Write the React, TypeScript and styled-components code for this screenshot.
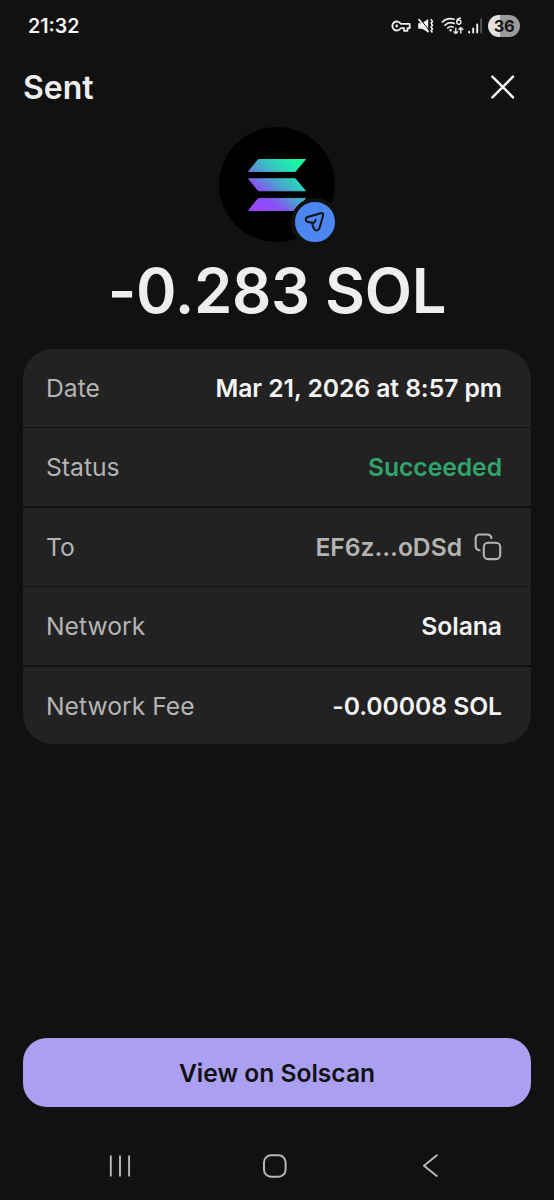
import React from "react";
import styled, { createGlobalStyle } from "styled-components";

const GlobalStyle = createGlobalStyle`
  * { box-sizing: border-box; }
  body {
    margin: 0;
    background: #111111;
    font-family: Inter, "Liberation Sans", sans-serif;
    color: #eeeeee;
  }
  button { font: inherit; border: 0; padding: 0; background: none; color: inherit; }
  svg { display: block; flex: none; }
`;

const Screen = styled.main`
  width: 554px;
  height: 1200px;
  display: flex;
  flex-direction: column;
  background: #111111;
  overflow: hidden;
`;

const StatusBar = styled.div`
  height: 52px;
  padding: 0 34px 0 28px;
  display: flex;
  align-items: center;
  justify-content: space-between;
`;

const Clock = styled.span`
  font-size: 19.6px;
  font-weight: 600;
  color: #f7f7f7;
`;

const StatusIcons = styled.div`
  display: flex;
  align-items: center;
`;

const NetworkIcons = styled.div`
  display: flex;
  align-items: center;
  gap: 6px;
  margin-right: 3px;
`;

const Battery = styled.span`
  width: 32px;
  height: 22px;
  margin-left: 5px;
  border-radius: 11px;
  display: flex;
  align-items: center;
  justify-content: center;
  background: linear-gradient(90deg, #e2e2e2 36%, #9b9b9b 36%);
  color: #151515;
  font-size: 16.5px;
  font-weight: 700;
  letter-spacing: -0.4px;
`;

const Header = styled.header`
  height: 70px;
  padding: 0 37px 0 23px;
  display: flex;
  align-items: center;
  justify-content: space-between;
`;

const Title = styled.h1`
  margin: 0;
  padding-top: 2px;
  font-size: 32px;
  line-height: 40px;
  font-weight: 600;
`;

const IconButton = styled.button`
  display: flex;
`;

const TokenAvatar = styled.div`
  position: relative;
  width: 116px;
  height: 115px;
  margin: 5px auto 0;
  border-radius: 50%;
  background: #000;
  display: flex;
  align-items: center;
  justify-content: center;
`;

const SentBadge = styled.span`
  position: absolute;
  right: -4px;
  bottom: -4px;
  width: 48px;
  height: 48px;
  border: 4px solid #111111;
  border-radius: 50%;
  background: #4c87f1;
`;

const Amount = styled.div`
  margin-top: 11px;
  height: 76px;
  line-height: 76px;
  text-align: center;
  white-space: nowrap;
  font-size: 61.5px;
  font-weight: 600;
  letter-spacing: -0.3px;
`;

const Details = styled.dl`
  margin: 20px 23px 0;
  height: 395.4px;
  border-radius: 30px;
  overflow: hidden;
  display: flex;
  flex-direction: column;
  gap: 1.8px;
`;

const Row = styled.div`
  flex: 1;
  padding: 0.3px 29px 0 23px;
  display: flex;
  align-items: center;
  justify-content: space-between;
  background: #222222;
  font-size: 24.7px;
`;

const Label = styled.dt`
  color: #b4b4b4;
`;

const Value = styled.dd<{ $color?: string }>`
  margin: 0;
  display: flex;
  align-items: center;
  gap: 12px;
  font-weight: 600;
  letter-spacing: -0.06px;
  color: ${({ $color = "#f4f4f4" }) => $color};
`;

const ExplorerButton = styled.button`
  && {
    margin: auto 23px 0;
    height: 69px;
    flex: none;
    border-radius: 24px;
    background: #ab9ff2;
    color: #111111;
    font-size: 24.6px;
    font-weight: 600;
  }
`;

const NavBar = styled.nav`
  height: 92.7px;
  flex: none;
  padding: 46.5px 108px 0 104px;
  display: flex;
  align-items: flex-start;
  justify-content: space-between;
`;

const KeyIcon = () => (
  <svg width="20" height="14" viewBox="0 0 20 14" fill="none" stroke="#f0f0f0" strokeWidth="1.8" strokeLinejoin="round">
    <path d="M9.8 4.9A4.5 4.5 0 1 0 9.8 9.1H13V11.8H16.5V9.1H18.7V4.9Z" />
    <circle cx="5.7" cy="7" r="1.4" fill="#f0f0f0" stroke="none" />
  </svg>
);

const MuteIcon = () => (
  <svg width="18" height="18" viewBox="0 0 18 18" fill="none" stroke="#f0f0f0" strokeWidth="1.7" strokeLinecap="round">
    <path d="M1.2 6.3H5L11.2 2V15.2L5 11.8H1.2Z" fill="#f0f0f0" stroke="none" />
    <path d="M2.9 1.8 12 13.2" stroke="#111111" strokeWidth="1" />
    <path d="M1.9 2.6 11 14.6" />
    <path d="M14.2 2.6 15.4 4.4 14.2 6.2 15.4 8.2 14.2 10.1 15.4 12 14.2 13.8 15 15" strokeWidth="1.6" />
  </svg>
);

const WifiIcon = () => (
  <svg width="24" height="20" viewBox="0 0 24 20" fill="none" stroke="#f0f0f0" strokeWidth="1.7" strokeLinecap="round" strokeLinejoin="round">
    <path d="M1.4 6C4.5 2.7 8.7 1.8 13 3.3M4 9.1C6.7 6.5 10 6.1 13.1 7.4M6.8 12C8.5 10.4 10.2 10.1 12 11" />
    <circle cx="9.5" cy="14.2" r="1.2" fill="#f0f0f0" stroke="none" />
    <path d="M19.3 2.3C16.9 2.2 15.8 3.6 15.8 5.8A2.1 2.1 0 1 0 16 5.2" strokeWidth="1.5" />
    <path d="M14.8 12.2V17.6M12.9 15.8 14.8 17.6 16.7 15.8M19.8 17V11.6M17.9 13.4 19.8 11.6 21.7 13.4" strokeWidth="1.4" />
  </svg>
);

const SignalIcon = () => (
  <svg width="15" height="16" viewBox="0 0 15 16" strokeWidth="1.9" strokeLinecap="round">
    <path d="M1.2 13.7V14.5M5.2 10.5V14.5M9.2 6.5V14.5" stroke="#f0f0f0" />
    <path d="M13.1 1.5V14.5" stroke="#555555" />
  </svg>
);

const CloseIcon = () => (
  <svg width="28" height="28" viewBox="0 0 28 28" stroke="#f3f3f3" strokeWidth="2.5" strokeLinecap="round">
    <path d="M3.4 3.7 24 24.3M24 3.7 3.4 24.3" />
  </svg>
);

const SolanaLogo = () => (
  <svg width="60" height="54" viewBox="0 0 60 54">
    <defs>
      <linearGradient id="sol" x1="6" y1="54" x2="51" y2="2" gradientUnits="userSpaceOnUse">
        <stop offset="0.08" stopColor="#9945ff" />
        <stop offset="0.3" stopColor="#8752f3" />
        <stop offset="0.5" stopColor="#5497d5" />
        <stop offset="0.68" stopColor="#35c5c0" />
        <stop offset="0.82" stopColor="#28e0b9" />
        <stop offset="1" stopColor="#19fb9b" />
      </linearGradient>
    </defs>
    <g fill="url(#sol)" stroke="url(#sol)" strokeWidth="1" strokeLinejoin="round">
      <path d="M11.3 1.5H58.4L48.3 13.4H1.6Z" />
      <path d="M1.6 20.8H48.3L58.4 32.8H11.3Z" />
      <path d="M11.3 40.4H58.4L48.3 52.4H1.6Z" />
    </g>
  </svg>
);

const SendIcon = () => (
  <svg width="40" height="40" viewBox="0 0 40 40" fill="none" stroke="#111111" strokeWidth="2" strokeLinecap="round" strokeLinejoin="round">
    <path d="M20.6 17.9C20.2 20.2 18.7 21.3 16.6 20.8L13.2 20.1C10.2 19.4 9.9 15.9 12.7 15L25.7 11.2C27.4 10.7 28.5 11.9 28.1 13.5L24.5 26C23.6 29 20.3 29.2 19 26.6L17.7 23.8Q17 22.1 18.1 20.6" />
  </svg>
);

const CopyIcon = () => (
  <svg width="28" height="28" viewBox="0 0 28 28" fill="none" stroke="#b4b4b4" strokeWidth="2.1" strokeLinecap="round">
    <rect x="9.8" y="9.7" width="16.4" height="16.4" rx="4.2" />
    <path d="M5.5 17.3C2.8 17 1.7 15.5 1.7 13V5.5C1.7 3 3.2 1.5 5.7 1.5H13C15.6 1.5 17.2 2.8 17.4 5.2" />
  </svg>
);

const RecentsIcon = () => (
  <svg width="32" height="24" viewBox="0 0 32 24" stroke="#b9b9b9" strokeWidth="1.9" strokeLinecap="round">
    <path d="M6.8 2.3V21.8M16 2.3V21.8M25.1 2.3V21.8" />
  </svg>
);

const HomeIcon = () => (
  <svg width="34" height="26" viewBox="0 0 34 26" fill="none" stroke="#b9b9b9" strokeWidth="2">
    <rect x="2" y="1.3" width="21.6" height="21.4" rx="7" />
  </svg>
);

const BackIcon = () => (
  <svg width="24" height="24" viewBox="0 0 24 24" fill="none" stroke="#b9b9b9" strokeWidth="2" strokeLinecap="round" strokeLinejoin="round">
    <path d="M14.8 1.3 2 11.8 14.8 22" />
  </svg>
);

export default function App() {
  return (
    <>
      <GlobalStyle />
      <Screen>
        <StatusBar>
          <Clock>21:32</Clock>
          <StatusIcons>
            <NetworkIcons>
              <KeyIcon />
              <MuteIcon />
              <WifiIcon />
            </NetworkIcons>
            <SignalIcon />
            <Battery>36</Battery>
          </StatusIcons>
        </StatusBar>
        <Header>
          <Title>Sent</Title>
          <IconButton aria-label="Close"><CloseIcon /></IconButton>
        </Header>
        <TokenAvatar>
          <SolanaLogo />
          <SentBadge><SendIcon /></SentBadge>
        </TokenAvatar>
        <Amount>-0.283 SOL</Amount>
        <Details>
          <Row><Label>Date</Label><Value>Mar 21, 2026 at 8:57 pm</Value></Row>
          <Row><Label>Status</Label><Value $color="#30a46c">Succeeded</Value></Row>
          <Row>
            <Label>To</Label>
            <Value $color="#b4b4b4">EF6z...oDSd<IconButton aria-label="Copy address"><CopyIcon /></IconButton></Value>
          </Row>
          <Row><Label>Network</Label><Value>Solana</Value></Row>
          <Row><Label>Network Fee</Label><Value>-0.00008 SOL</Value></Row>
        </Details>
        <ExplorerButton>View on Solscan</ExplorerButton>
        <NavBar>
          <IconButton aria-label="Recents"><RecentsIcon /></IconButton>
          <IconButton aria-label="Home"><HomeIcon /></IconButton>
          <IconButton aria-label="Back"><BackIcon /></IconButton>
        </NavBar>
      </Screen>
    </>
  );
}
